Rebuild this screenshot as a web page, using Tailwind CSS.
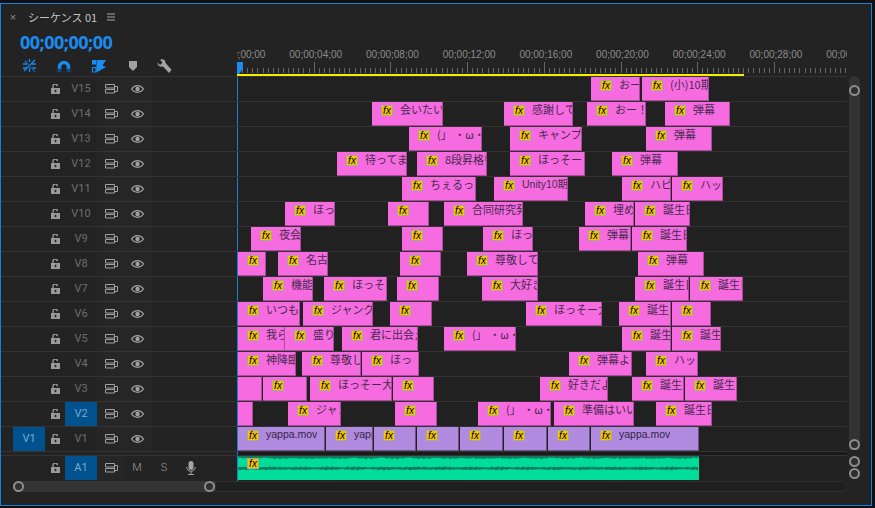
<!DOCTYPE html>
<html lang="ja">
  <head>
    <meta charset="UTF-8" />
    <title>シーケンス 01</title>
    <script src="https://cdn.jsdelivr.net/npm/@tailwindcss/browser@4"></script>
  </head>
  <body class="bg-[#101010] overflow-hidden font-['Liberation_Sans','Noto_Sans_CJK_JP',sans-serif]">
    <div class="mt-[3px] w-[872px] h-[503px] border border-[#1a7fd8] bg-[#232323] flex flex-col">
      <!-- header + ruler -->
      <div class="flex h-[72px]">
        <div class="w-[236px] shrink-0 relative">
          <div class="flex items-center h-[26px]">
            <span class="ml-[7px] w-[10px] text-center text-[#8c8c8c] text-[11px]">×</span>
            <span class="ml-[10px] text-[11px] text-[#c4c4c4] font-['Noto_Sans_CJK_JP',sans-serif]">シーケンス 01</span>
            <svg class="ml-[10px]" width="9" height="8" viewBox="0 0 9 8"><path d="M0 1h8M0 4h8M0 7h8" stroke="#a8a8a8" stroke-width="1" /></svg>
          </div>
          <div class="ml-[19px] mt-[1px] h-[22px] flex items-center text-[18px] font-bold text-[#1a8cf0] tracking-[-0.5px] font-['Open_Sans',sans-serif]">00;00;00;00</div>
          <div class="flex items-center h-[16px] mt-[5px]">
            <!-- snap -->
            <svg class="ml-[21px]" width="15" height="14" viewBox="0 0 15 14" fill="none" stroke="#1a8cf0" stroke-width="1.3"><path d="M7.5 0v3M7.5 9v4M1 5h4M10 5h4M1 9h4M10 9h4M3 2l3 3M12 2l-3 3M2 12l11-11" /><path d="M4 3l9 10" stroke="#0b5ea8" /></svg>
            <!-- magnet -->
            <svg class="ml-[20px]" width="14" height="13" viewBox="0 0 14 13" fill="none"><path d="M2.5 12V7a4.5 4.5 0 0 1 9 0v5" stroke="#1a8cf0" stroke-width="3.4" /><path d="M.8 10.500h3.400M9.800 10.500h3.400" stroke="#0a4a86" stroke-width="3.400" /></svg>
            <!-- linked -->
            <svg class="ml-[20px]" width="16" height="14" viewBox="0 0 16 14"><path d="M1 1h4v4.500H1z" fill="#1a8cf0" /><path d="M1.500 8.500h3.500v4.500H1.500z" fill="none" stroke="#1a8cf0" stroke-width="1.200" /><path d="M5.500 1H15l-3.500 5.500L15 8l-9.500 5.500z" fill="#1a8cf0" /></svg>
            <!-- marker -->
            <svg class="ml-[22px]" width="8" height="10" viewBox="0 0 8 10"><path d="M0 0h8v6L4 10 0 6z" fill="#a0a0a0" /></svg>
            <!-- wrench -->
            <svg class="ml-[20px]" width="15" height="15" viewBox="0 0 15 15"><path d="M.5 3.500 3 6 5.500 3.800 3.200.8C5.800-.4 8.500 1 8.600 4L14.500 10.800 12 14 6 7.600C3 8.200.2 6.500.5 3.500z" fill="#a4a4a4" /></svg>
          </div>
        </div>
        <div id="ruler" class="relative w-[610px] h-[72px] overflow-hidden"></div>
      </div>

      <div class="flex">
        <div class="w-[846px]">
          <div class="h-px bg-[#333333]"></div>
          <div id="rows"></div>
          <!-- gap between video and audio -->
          <div class="flex h-[4px] border-b border-[#333333]">
            <div class="w-[236px]"></div>
            <div class="w-px bg-[#1a7fd8]"></div>
            <div class="flex-1 bg-[#1a1a1a]"></div>
          </div>
          <!-- A1 -->
          <div class="flex h-[25px] text-[#8c8c8c]">
            <div class="w-[236px] h-[25px] flex items-stretch border-b border-[#232323]">
              <div class="w-[44px]"></div>
              <div class="w-[20px] flex items-center justify-center" data-icon="lock"></div>
              <div class="w-[32px] bg-[#00528f] text-[#7aa9cc] text-[11px] flex items-center justify-center font-['Roboto',sans-serif]">A1</div>
              <div class="w-[28px] bg-[#262626] flex items-center pl-[8px]" data-icon="out"></div>
              <div class="w-[24px] text-center text-[11px] leading-[24px] text-[#9a9a9a] font-['Roboto',sans-serif] font-light">M</div>
              <div class="w-[30px] text-center text-[11px] leading-[24px] text-[#9a9a9a] font-['Roboto',sans-serif] font-light">S</div>
              <div class="w-[24px] flex items-center justify-center">
                <svg width="10" height="14" viewBox="0 0 10 14" fill="none"><rect x="2.500" y="0" width="5" height="9" rx="2.500" fill="#a4a4a4" /><path d="M.7 6a4.3 4.3 0 0 0 8.6 0M5 10.500V13M2 13.500h6" stroke="#a4a4a4" /></svg>
              </div>
            </div>
            <div class="w-[610px] h-[25px] border-l border-[#1a7fd8] relative bg-[#212121]">
              <svg id="wave" class="absolute left-0 top-0" width="461" height="24" viewBox="0 0 461 24"></svg>
              <span class="absolute left-[9px] top-[2px] w-[12px] h-[11px] bg-[#f5c400] border border-[#a9a998] text-black italic text-[10px] leading-[9px] text-center">fx</span>
            </div>
          </div>
        </div>
        <!-- vertical scrollbars -->
        <div class="w-[12px] ml-[1px] flex flex-col items-center">
          <div class="h-[374px] w-[11px] bg-[#333333] rounded-t-full flex flex-col items-center justify-between pt-[9px] pb-[2px]">
            <span class="w-[11px] h-[11px] rounded-full border-2 border-[#8e8e8e] bg-[#2e2e2e]"></span>
            <span class="w-[11px] h-[11px] rounded-full border-2 border-[#8e8e8e] bg-[#2e2e2e] -mb-[2px]"></span>
          </div>
          <div class="flex flex-col items-center gap-[1px] mt-[6px]">
            <span class="w-[11px] h-[11px] rounded-full border-2 border-[#8e8e8e] bg-[#2e2e2e]"></span>
            <span class="w-[11px] h-[11px] rounded-full border-2 border-[#8e8e8e] bg-[#2e2e2e]"></span>
          </div>
        </div>
      </div>

      <!-- horizontal scrollbar -->
      <div class="flex items-center h-[11px] ml-[12px] w-[834px]">
        <div class="w-[202px] h-[11px] bg-[#353535] rounded-l-full flex items-center justify-between">
          <span class="w-[11px] h-[11px] rounded-full border-2 border-[#8e8e8e] bg-[#2e2e2e]"></span>
          <span class="w-[11px] h-[11px] rounded-full border-2 border-[#8e8e8e] bg-[#2e2e2e]"></span>
        </div>
        <div class="flex-1 h-[11px] border border-[#303030] rounded-r-full bg-[#1f1f1f]"></div>
      </div>
    </div>

    <script>
      const PINK = "bg-[#f66ce0] border-r border-b border-black/30 text-[#472a4e]";
      const PURPLE = "bg-[#af8ade] border-r border-b border-black/40 text-[#33264a]";

      // [start x, end x, label] in window pixels, 4th item true for clips without badge
      const tracks = [
        ["V15", [[591, 640, "おー"], [642, 709, "(小)10期"]]],
        ["V14", [[372, 443, "会いたい"], [504, 573, "感謝して"], [587, 646, "おー！"], [665, 730, "弾幕"]]],
        ["V13", [[409, 482, "(」 ・ω・)"], [510, 582, "キャンプ"], [646, 712, "弾幕"]]],
        ["V12", [[337, 407, "待ってま"], [417, 487, "8段昇格い"], [510, 585, "ほっそー"], [612, 678, "弾幕"]]],
        ["V11", [[402, 476, "ちぇるっ"], [494, 568, "Unity10期"], [622, 671, "ハピ"], [672, 723, "ハッ"]]],
        ["V10", [[285, 335, "ほっ"], [388, 429, ""], [444, 523, "合同研究発"], [585, 634, "埋め"], [635, 690, "誕生日"]]],
        ["V9", [[251, 301, "夜会"], [402, 443, ""], [483, 533, "ほっ"], [579, 631, "弾幕"], [632, 687, "誕生日"]]],
        ["V8", [[238, 266, ""], [278, 328, "名古"], [400, 441, ""], [467, 538, "尊敬して"], [638, 704, "弾幕"]]],
        ["V7", [[263, 313, "機能"], [324, 387, "ほっそー"], [397, 439, ""], [482, 538, "大好き"], [635, 689, "誕生日"], [690, 743, "誕生日"]]],
        ["V6", [[238, 300, "いつも"], [303, 373, "ジャング"], [390, 432, ""], [526, 602, "ほっそー大"], [619, 671, "誕生日"], [672, 711, ""]]],
        ["V5", [[238, 285, "我ら"], [285, 334, "盛り"], [342, 418, "君に出会え"], [444, 516, "(」 ・ω・)"], [622, 671, "誕生日"], [672, 721, "誕生日"]]],
        ["V4", [[238, 296, "神降臨"], [302, 361, "尊敬し"], [362, 419, "ほっ"], [569, 632, "弾幕よー"], [646, 698, "ハッ"]]],
        ["V3", [[238, 262, "", true], [263, 307, ""], [310, 392, "ほっそー大"], [393, 434, ""], [540, 608, "好きだよ"], [632, 684, "誕生日"], [685, 737, "誕生日"]]],
        ["V2", [[238, 253, "", true], [288, 341, "ジャング"], [395, 437, ""], [478, 551, "(」 ・ω・)"], [554, 634, "準備はいい"], [656, 712, "誕生日"]]],
        ["V1", [[238, 325, "yappa.mov"], [326, 373, "yappa.mov"], [374, 416, ""], [417, 459, ""], [460, 503, ""], [504, 547, ""], [548, 590, ""], [591, 699, "yappa.mov"]]],
      ];

      const lockSvg = '<svg width="9" height="10" viewBox="0 0 9 10"><path d="M0 4h9v6H0z" fill="#9a9a9a" /><path d="M2 4V2.200a2.200 2.200 0 0 1 4.400 0" fill="none" stroke="#9a9a9a" stroke-width="1.300" /><rect x="3.700" y="5.800" width="1.600" height="2.400" fill="#232323" /></svg>';
      const outSvg = '<svg width="13" height="10" viewBox="0 0 13 10" fill="none" stroke="#a0a0a0"><path d="M.5.500h9v3.500h-9zM.5 5.500h9V9h-9zM9.500 2.500h3v5h-3z" /></svg>';
      const eyeSvg = '<svg width="13" height="8" viewBox="0 0 13 8"><path d="M.5 4C3.500-.4 9.500-.4 12.500 4 9.500 8.400 3.500 8.400.5 4z" fill="none" stroke="#a0a0a0" stroke-width="1.200" /><circle cx="6.500" cy="4" r="2.200" fill="#a0a0a0" /></svg>';

      function clipHtml(c, cls) {
        const left = c[0] - 238;
        const width = c[1] - c[0];
        const badge = c[3] ? "" : '<span class="shrink-0 ml-[9px] mt-[3px] w-[12px] h-[11px] bg-[#f5c400] border border-[#a9a998] text-black italic text-[10px] leading-[9px] text-center">fx</span>';
        // latin names are narrower in the original than the CJK font's latin
        const font = /^[a-zA-Z]/.test(c[2])
          ? "text-[10.5px] font-['Liberation_Sans','Noto_Sans_CJK_JP',sans-serif]"
          : "text-[11px] font-['Noto_Sans_CJK_JP',sans-serif]";
        return `<div class="absolute top-0 h-[24px] overflow-hidden flex whitespace-nowrap ${cls}" style="left:${left}px;width:${width}px">${badge}<span class="ml-[7px] min-w-0 overflow-hidden leading-[15px] ${font}">${c[2]}</span></div>`;
      }

      document.getElementById("rows").innerHTML = tracks.map(([name, clips]) => {
        const target = name === "V2"
          ? "bg-[#00528f] text-[#7aa9cc]"
          : "text-[#6e6e6e]";
        const source = name === "V1"
          ? `<div class="ml-[12px] w-[32px] bg-[#00528f] text-[#7aa9cc] flex items-center justify-center">V1</div>`
          : `<div class="ml-[12px] w-[32px]"></div>`;
        const cls = name === "V1" ? PURPLE : PINK;
        return `<div class="flex h-[25px] border-b border-[#333333]">
          <div class="w-[236px] flex items-stretch text-[11px] font-['Roboto',sans-serif]">
            ${source}
            <div class="w-[20px] flex items-center justify-center">${lockSvg}</div>
            <div class="w-[32px] flex items-center justify-center ${target}">${name}</div>
            <div class="w-[55px] bg-[#262626] flex items-center pl-[8px] gap-[13px]">${outSvg}${eyeSvg}</div>
          </div>
          <div class="w-[610px] relative border-l border-[#1a7fd8] bg-[#212121]">${clips.map(c => clipHtml(c, cls)).join("")}</div>
        </div>`;
      }).join("");

      document.querySelectorAll('[data-icon="lock"]').forEach(e => e.innerHTML = lockSvg);
      document.querySelectorAll('[data-icon="out"]').forEach(e => e.innerHTML = outSvg);

      // ruler: a major tick every 76.7px, 15 minor ticks per major
      const pitch = 76.7;
      const labels = ["00;00;00;00", "00;00;04;00", "00;00;08;00", "00;00;12;00", "00;00;16;00", "00;00;20;00", "00;00;24;00", "00;00;28;00", "00;00;32;00"];
      let ruler = "";
      labels.forEach((t, i) => {
        ruler += `<span class="absolute top-[45px] -translate-x-1/2 text-[10px] leading-[12px] text-[#8c8c8c]" style="left:${2 + i * pitch}px">${t}</span>`;
        ruler += `<span class="absolute top-[58px] w-px h-[11px] bg-[#666666]" style="left:${i * pitch}px"></span>`;
        for (let j = 1; j < 15; j++) {
          ruler += `<span class="absolute top-[64px] w-px h-[5px] bg-[#666666]" style="left:${Math.round(i * pitch + (j * pitch) / 15)}px"></span>`;
        }
      });
      ruler += '<div class="absolute left-0 top-[70px] w-[507px] h-[2px] bg-[#f2f200]"></div>';
      ruler += '<svg class="absolute left-0 top-[58px]" width="6" height="12" viewBox="0 0 6 12"><path d="M0 0h6v7L2 12H0z" fill="#1a8cf0" /></svg>';
      document.getElementById("ruler").innerHTML = ruler;

      // waveform: jagged dark edge on top, dark centre band
      function jag(i, n) {
        return Math.abs(Math.sin(i * 1.7) * Math.cos(i * 0.37) + Math.sin(i * 0.11)) * n;
      }
      let waveTop = "M0 0", midA = "M0 11.5", midB = "";
      for (let i = 0; i <= 461; i += 2) {
        waveTop += `L${i} ${(1.5 + jag(i, 1.1)).toFixed(1)}`;
        midA += `L${i} ${(11.5 - jag(i + 9, 0.6)).toFixed(1)}`;
        midB = `L${i} ${(13 + jag(i + 40, 0.8)).toFixed(1)}` + midB;
      }
      document.getElementById("wave").innerHTML =
        '<rect width="461" height="24" fill="#00dd9b" />' +
        `<path d="${waveTop}L461 0z" fill="#147a5c" /><path d="${midA}${midB}z" fill="#147a5c" />`;
    </script>
  </body>
</html>
